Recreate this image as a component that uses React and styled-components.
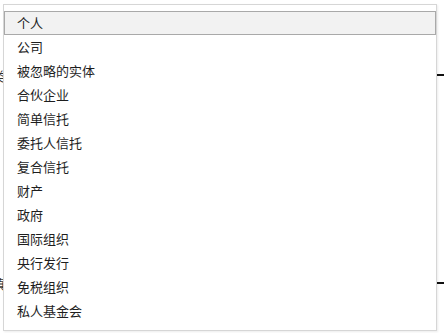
import React from "react";
import styled, { createGlobalStyle } from "styled-components";

const Global = createGlobalStyle`
  html, body { margin: 0; padding: 0; background: #fff; }
  body { font-family: "Noto Sans CJK SC", "Liberation Sans", sans-serif; }
`;

const Page = styled.div`
  position: relative;
  width: 444px;
  height: 333px;
  overflow: hidden;
  background: #fff;
`;

const FormRow = styled.div`
  display: flex;
  justify-content: space-between;
  align-items: center;
  height: 24px;
  margin-top: ${p => p.top}px;
`;

const Label = styled.span`
  font-size: 13px;
  color: #333;
  margin-left: -8px;
`;

const Rule = styled.div`
  width: 30px;
  height: 2px;
  background: #111;
  margin-right: -20px;
`;

const Menu = styled.ul`
  position: absolute;
  left: 3px;
  top: 4px;
  width: 434px;
  height: 327px;
  box-sizing: border-box;
  margin: 0;
  padding: 6px 0 0;
  list-style: none;
  background: #fff;
  border: 1px solid #d6d6d6;
  box-shadow: 1px 1px 2px rgba(0, 0, 0, 0.08);
`;

const Item = styled.li`
  height: 24px;
  box-sizing: border-box;
  padding-left: 12px;
  font-size: 13px;
  line-height: 22px;
  color: #1e1e1e;
  border: 1px solid ${p => (p.active ? "#a9a9a9" : "transparent")};
  background: ${p => (p.active ? "#f2f2f2" : "transparent")};
`;

const options = [
  "个人",
  "公司",
  "被忽略的实体",
  "合伙企业",
  "简单信托",
  "委托人信托",
  "复合信托",
  "财产",
  "政府",
  "国际组织",
  "央行发行",
  "免税组织",
  "私人基金会",
];

export default function App() {
  return (
    <Page>
      <Global />
      <FormRow top={63}>
        <Label>类</Label>
        <Rule />
      </FormRow>
      <FormRow top={184}>
        <Label>填</Label>
        <Rule />
      </FormRow>
      <Menu>
        {options.map((o, i) => (
          <Item key={o} active={i === 0}>
            {o}
          </Item>
        ))}
      </Menu>
    </Page>
  );
}
